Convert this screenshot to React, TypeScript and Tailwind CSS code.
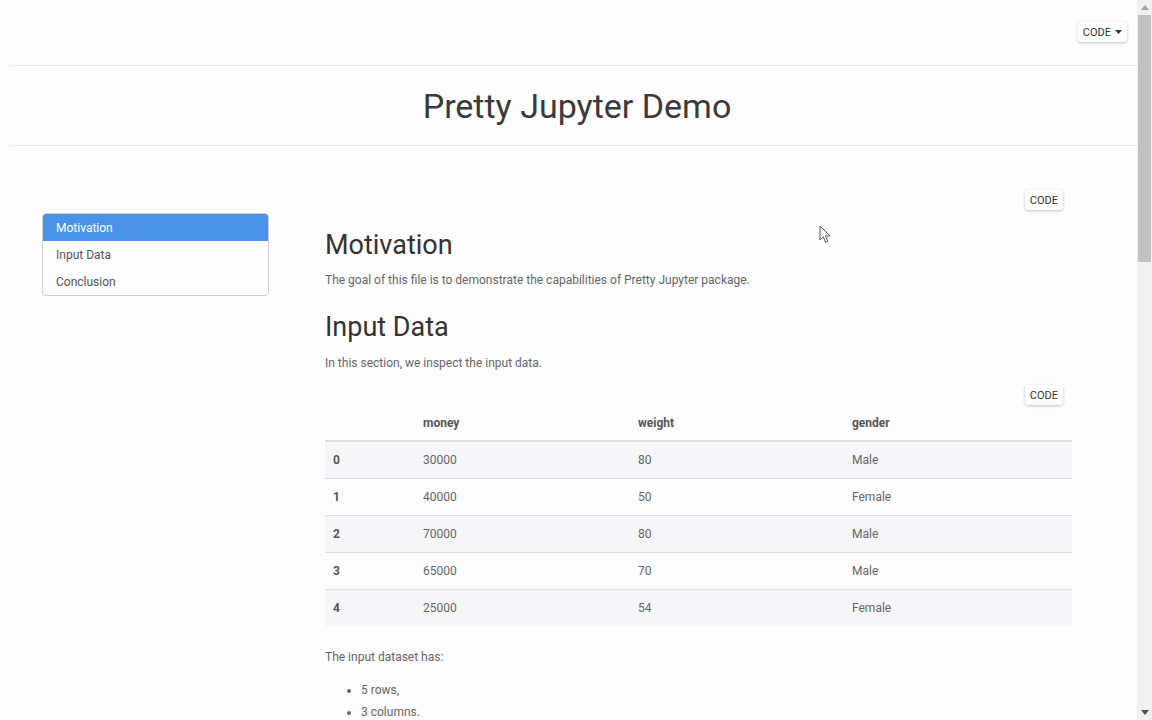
import React from "react";

const rows = [
  { idx: "0", money: "30000", weight: "80", gender: "Male" },
  { idx: "1", money: "40000", weight: "50", gender: "Female" },
  { idx: "2", money: "70000", weight: "80", gender: "Male" },
  { idx: "3", money: "65000", weight: "70", gender: "Male" },
  { idx: "4", money: "25000", weight: "54", gender: "Female" },
];

function CodeButton({ caret }: { caret?: boolean }) {
  return (
    <button className="flex items-center gap-[4px] h-[20px] px-[5px] text-[11px] leading-none text-[#333] bg-white rounded-[3px] shadow-[0_1px_3px_rgba(0,0,0,0.25)]">
      CODE
      {caret && (
        <svg width="7" height="4" viewBox="0 0 7 4">
          <path d="M0 0h7L3.5 4z" fill="#333" />
        </svg>
      )}
    </button>
  );
}

function Scrollbar() {
  return (
    <div className="w-[15px] h-full bg-[#f1f1f1] flex flex-col items-center">
      <div className="h-[15px] flex items-center justify-center">
        <svg width="8" height="5" viewBox="0 0 8 5">
          <path d="M0 5h8L4 0z" fill="#a3a3a3" />
        </svg>
      </div>
      <div className="w-[13px] h-[247px] bg-[#c1c1c1]" />
      <div className="flex-1" />
      <div className="h-[15px] flex items-center justify-center">
        <svg width="8" height="5" viewBox="0 0 8 5">
          <path d="M0 0h8L4 5z" fill="#505050" />
        </svg>
      </div>
    </div>
  );
}

export default function App() {
  return (
    <div
      className="flex h-[720px] w-[1152px] overflow-hidden bg-[#fdfcfe] text-[#666]"
      style={{ fontFamily: "Roboto, 'Liberation Sans', sans-serif" }}
    >
      <div className="relative flex-1 min-w-0">
        <div className="h-[65px] flex justify-end items-start pt-[22px] pr-[10px]">
          <CodeButton caret />
        </div>
        <div className="ml-[9px] border-t border-b border-[#eaeaea] h-[81px] flex items-center justify-center pl-[8px]">
          <h1 className="text-[34px] leading-none text-[#3a3a3a] font-normal">Pretty Jupyter Demo</h1>
        </div>

        <div className="flex">
          <div className="ml-[42px] mt-[67px] w-[227px] self-start border border-[#cfcfcf] rounded-[4px] overflow-hidden text-[12px]">
            <div className="h-[27px] flex items-center pl-[13px] bg-[#4a93e9] text-white">Motivation</div>
            <div className="h-[27px] flex items-center pl-[13px] text-[#555]">Input Data</div>
            <div className="h-[27px] flex items-center pl-[13px] text-[#555]">Conclusion</div>
          </div>

          <div className="ml-[56px] w-[747px] text-[12px]">
            <div className="mt-[44px] flex justify-end pr-[9px]">
              <CodeButton />
            </div>
            <h2 className="mt-[17px] text-[27px] leading-[36px] text-[#333]">Motivation</h2>
            <p className="mt-[7px] leading-[20px]">
              The goal of this file is to demonstrate the capabilities of Pretty Jupyter package.
            </p>
            <h2 className="mt-[19px] text-[27px] leading-[36px] text-[#333]">Input Data</h2>
            <p className="mt-[8px] leading-[20px]">In this section, we inspect the input data.</p>
            <div className="mt-[12px] flex justify-end pr-[9px]">
              <CodeButton />
            </div>
            <table className="w-full border-collapse">
              <thead>
                <tr className="h-[36px] border-b-2 border-[#dedede] text-left text-[#555]">
                  <th className="w-[98px] pl-[8px] font-bold"></th>
                  <th className="w-[215px] font-bold">money</th>
                  <th className="w-[214px] font-bold">weight</th>
                  <th className="font-bold">gender</th>
                </tr>
              </thead>
              <tbody>
                {rows.map((r, i) => (
                  <tr
                    key={r.idx}
                    className={`h-[37px] ${i < rows.length - 1 ? "border-b border-[#dedede]" : ""} ${
                      i % 2 === 0 ? "bg-[#f6f5f7]" : ""
                    }`}
                  >
                    <td className="pl-[8px] font-bold text-[#555]">{r.idx}</td>
                    <td>{r.money}</td>
                    <td>{r.weight}</td>
                    <td>{r.gender}</td>
                  </tr>
                ))}
              </tbody>
            </table>
            <p className="mt-[21px] leading-[20px]">The input dataset has:</p>
            <ul className="mt-[12px] pl-[36px] list-disc">
              <li className="leading-[22px]">5 rows,</li>
              <li className="leading-[22px]">3 columns.</li>
            </ul>
          </div>
        </div>

        <svg className="absolute left-[819px] top-[225px]" width="13" height="19" viewBox="0 0 13 19">
          <path
            d="M1 1v14l3.3-3.2 2.3 5.4 2.2-1-2.3-5.3H11z"
            fill="white"
            stroke="#555"
            strokeWidth="1"
            strokeLinejoin="round"
          />
        </svg>
      </div>
      <Scrollbar />
    </div>
  );
}
